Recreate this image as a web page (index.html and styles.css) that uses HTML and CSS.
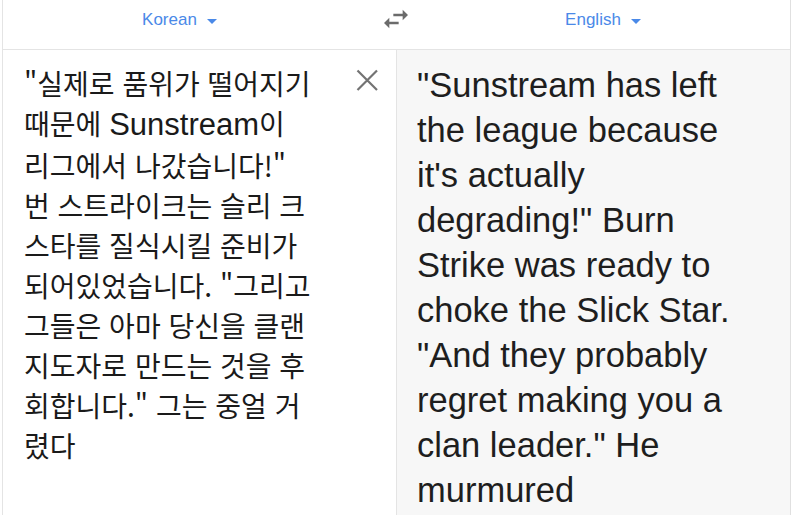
FILE: index.html
```html
<!DOCTYPE html>
<html lang="ko">
<head>
<meta charset="utf-8">
<title>Translate</title>
<link rel="stylesheet" href="styles.css">
</head>
<body>
<div class="app">
  <header class="langbar">
    <div class="lang"><span class="lang-name">Korean</span><span class="caret"></span></div>
    <div class="swap">
      <svg class="swap-icon" viewBox="0 0 24 24" width="32" height="32"><path d="M6.99 11L3 15l3.99 4v-3H14v-2H6.99v-3zM21 9l-4-4v3h-7v2h7v3l4-4z" fill="#6b6b6b"/></svg>
    </div>
    <div class="lang"><span class="lang-name">English</span><span class="caret"></span></div>
    <div></div>
  </header>
  <main class="panes">
    <section class="pane source">
      <p class="source-text">"실제로 품위가 떨어지기<br>때문에 <span class="latin">Sunstream</span>이<br>리그에서 나갔습니다!"<br>번 스트라이크는 슬리 크<br>스타를 질식시킬 준비가<br>되어있었습니다. "그리고<br>그들은 아마 당신을 클랜<br>지도자로 만드는 것을 후<br>회합니다." 그는 중얼 거<br>렸다</p>
      <button class="clear" aria-label="Clear">
        <svg viewBox="0 0 24 24" width="24" height="24"><path d="M2.5 2.5L22 22M22 2.5L2.5 22" stroke="#737373" stroke-width="2.2" fill="none"/></svg>
      </button>
    </section>
    <section class="pane target">
      <p class="target-text">"Sunstream has left<br>the league because<br>it's actually<br>degrading!" Burn<br>Strike was ready to<br>choke the Slick Star.<br>"And they probably<br>regret making you a<br>clan leader." He<br>murmured</p>
    </section>
  </main>
</div>
</body>
</html>
```
FILE: styles.css
```css
html, body {
  margin: 0;
  padding: 0;
  background: #ffffff;
  height: 100%;
  overflow: hidden;
}

.app {
  margin-left: 2px;
  width: 787px;
  height: 515px;
  border-left: 1px solid #e4e4e4;
  border-right: 1px solid #e0e0e0;
  display: flex;
  flex-direction: column;
  font-family: "Liberation Sans", Arial, sans-serif;
  color: #212121;
}

.langbar {
  height: 49px;
  border-bottom: 1px solid #e4e4e4;
  display: grid;
  grid-template-columns: 353px 80px 334px 1fr;
  background: #fff;
}

.lang {
  display: flex;
  justify-content: center;
  align-items: flex-start;
  padding-top: 10px;
  color: #4a89e8;
  font-size: 17px;
  line-height: 20px;
}

.caret {
  width: 0;
  height: 0;
  margin-left: 10px;
  margin-top: 9px;
  border-left: 5.5px solid transparent;
  border-right: 5.5px solid transparent;
  border-top: 5.5px solid #4a89e8;
}

.swap {
  display: flex;
  justify-content: center;
  align-items: flex-start;
  padding-top: 3px;
}

.swap-icon {
  display: block;
}

.panes {
  flex: 1;
  display: grid;
  grid-template-columns: 393px 393px;
  column-gap: 1px;
  background: #e4e4e4;
}

.pane {
  display: flex;
  align-items: flex-start;
}

.source {
  background: #ffffff;
  padding: 13px 17px 0 21px;
}

.target {
  background: #f7f7f7;
  padding: 13px 20px 0 20px;
}

.source-text {
  flex: 1;
  margin: 0;
  font-family: "Noto Sans CJK KR", "Liberation Sans", sans-serif;
  font-size: 28px;
  font-weight: 400;
  line-height: 40px;
  white-space: nowrap;
  color: #1a1a1a;
}

.latin {
  font-family: "Liberation Sans", Arial, sans-serif;
  font-size: 31px;
  font-weight: 400;
}

.clear {
  width: 24px;
  height: 24px;
  padding: 0;
  margin-top: 5px;
  border: 0;
  background: transparent;
  display: block;
}

.clear svg {
  display: block;
}

.target-text {
  margin: 0;
  font-size: 34.5px;
  line-height: 45px;
  white-space: nowrap;
  color: #1e1e1e;
}
```
